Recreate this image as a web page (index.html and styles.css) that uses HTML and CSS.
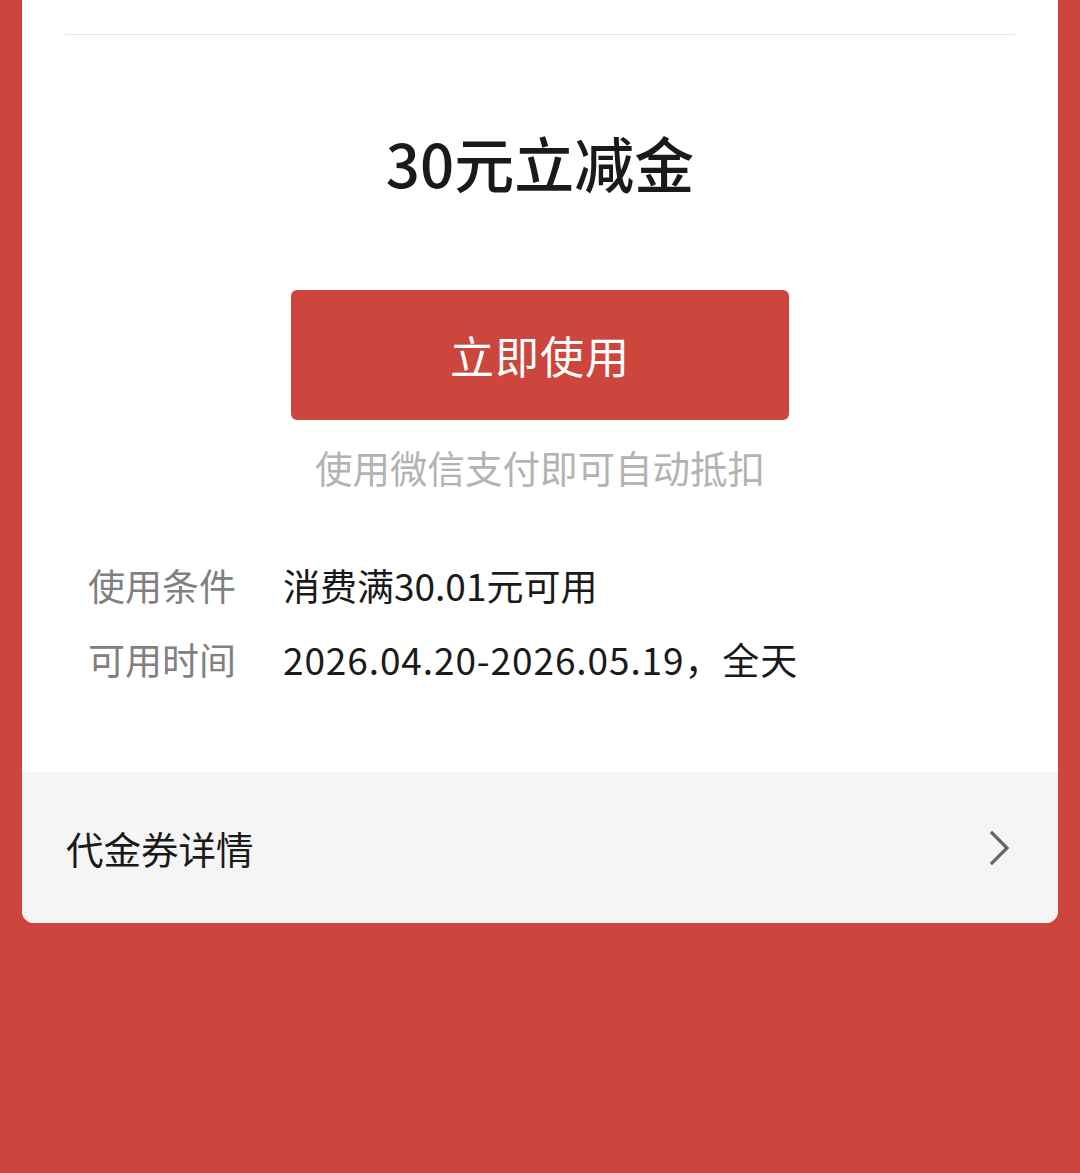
FILE: index.html
```html
<!DOCTYPE html>
<html lang="zh-CN">
<head>
  <meta charset="UTF-8">
  <meta name="viewport" content="width=device-width, initial-scale=1.0">
  <title>代金券</title>
  <link rel="stylesheet" href="styles.css">
</head>
<body>
  <div class="card">
    <div class="main">
      <h1 class="title">30元立减金</h1>
      <button class="use-btn" type="button">立即使用</button>
      <p class="tip">使用微信支付即可自动抵扣</p>

      <!-- 使用规则 -->
      <dl class="rules">
        <dt>使用条件</dt>
        <dd>消费满30.01元可用</dd>
        <dt>可用时间</dt>
        <dd class="date">2026.04.20-2026.05.19，全天</dd>
      </dl>
    </div>

    <a class="detail" href="#">
      <span>代金券详情</span>
      <svg class="arrow" width="24" height="40" viewBox="0 0 24 40">
        <path d="M4 5 L19 20 L4 35" fill="none" stroke="#666" stroke-width="3.2" stroke-linecap="square" stroke-linejoin="miter"/>
      </svg>
    </a>
  </div>
</body>
</html>
```

FILE: styles.css
```css
body {
  margin: 0;
  background: #cc463d;
  font-family: "Noto Sans CJK SC", "Noto Sans", sans-serif;
  min-height: 1173px;
}
.card {
  margin: 0 22px;
  background: #fff;
  border-radius: 0 0 12px 12px;
  overflow: hidden;
}
.main {
  margin: 0 43px;
  padding-top: 34px;
  padding-bottom: 87px;
}
.main::before {
  content: "";
  display: block;
  border-top: 1px solid #e5e5e5;
}
.title {
  margin: 85px 0 0;
  text-align: center;
  font-size: 60px;
  line-height: 84px;
  font-weight: 500;
  color: #1a1a1a;
}
.use-btn {
  display: block;
  width: 498px;
  height: 130px;
  margin: 86px auto 0;
  border: none;
  border-radius: 6px;
  background: #cc463d;
  color: #fff;
  font-family: inherit;
  font-size: 44px;
  letter-spacing: 1px;
}
.tip {
  margin: 21px 0 0;
  text-align: center;
  font-size: 37.5px;
  line-height: 52px;
  color: #b3b3b3;
}
.rules {
  display: grid;
  grid-template-columns: 150px 1fr;
  column-gap: 45px;
  row-gap: 22px;
  margin: 66px 0 0;
  padding-left: 23px;
  font-size: 37px;
  line-height: 52px;
}
.rules dt {
  color: #808080;
}
.rules dd {
  margin: 0;
  color: #1a1a1a;
}
.rules .date {
  letter-spacing: 0.9px;
}
.detail {
  display: flex;
  align-items: center;
  justify-content: space-between;
  height: 151px;
  padding: 0 46px 0 44px;
  background: #f5f5f5;
  color: #1a1a1a;
  text-decoration: none;
  font-size: 37.5px;
}
.arrow {
  display: block;
}
```
